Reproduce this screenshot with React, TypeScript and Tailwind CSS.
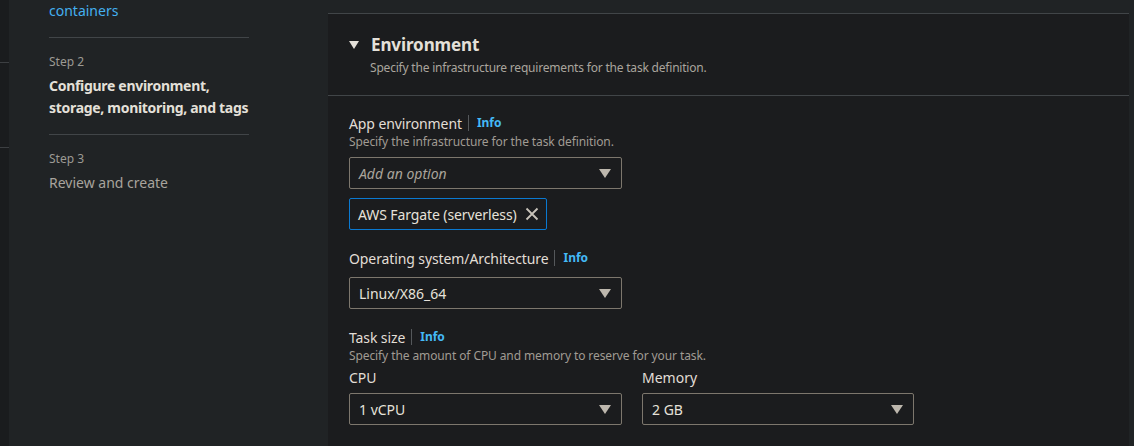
import React from "react";

const Caret = () => (
  <svg width="12" height="9" viewBox="0 0 12 9" className="shrink-0">
    <path d="M0 0 H12 L6 9 Z" fill="#bdb7ad" />
  </svg>
);

const Select = ({ value, placeholder, w }: { value?: string; placeholder?: string; w: string }) => (
  <div className={`${w} h-[32px] border border-[#7d776d] rounded-[2px] flex items-center justify-between pl-[9px] pr-[10px]`}>
    {placeholder ? (
      <span className="italic text-[#aaa49b] text-[14px]">{placeholder}</span>
    ) : (
      <span className="text-[#e6e2da] text-[14px]">{value}</span>
    )}
    <Caret />
  </div>
);

const Label = ({ text, info }: { text: string; info?: boolean }) => (
  <div className="flex items-center h-[22px]">
    <span className="text-[14px] text-[#e2ded6] tracking-[-0.1px]">{text}</span>
    {info && (
      <>
        <span className="ml-[6px] mr-[8px] w-px h-[16px] bg-[#55585b]" />
        <span className="text-[12px] font-bold text-[#44b9f6]">Info</span>
      </>
    )}
  </div>
);

export default function App() {
  return (
    <div
      className="flex w-[1134px] h-[446px] overflow-hidden bg-[#202325]"
      style={{ fontFamily: "'Noto Sans', 'Open Sans', sans-serif" }}
    >
      <div className="w-[9px] shrink-0 bg-[#1a1c1e] flex flex-col">
        <div className="h-[62px]" />
        <div className="h-px bg-[#3c3f42]" />
        <div className="h-[84px]" />
        <div className="h-px bg-[#3c3f42]" />
      </div>
      <div className="w-[319px] shrink-0 pl-[40px]">
        <div className="w-[200px]">
          <div className="text-[14px] leading-[22px] text-[#44b0f0] pb-[15px]">containers</div>
          <div className="h-px bg-[#414548]" />
          <div className="pt-[14px] pb-[15px]">
            <div className="text-[12px] leading-[20px] text-[#9c9a94]">Step 2</div>
            <div className="mt-[3px] w-[230px] text-[14px] leading-[22px] font-bold text-[#e4e0d9] tracking-[-0.3px]">
              Configure environment,
              <br />
              storage, monitoring, and tags
            </div>
          </div>
          <div className="h-px bg-[#414548]" />
          <div className="pt-[14px]">
            <div className="text-[12px] leading-[20px] text-[#9c9a94]">Step 3</div>
            <div className="mt-[3px] text-[14px] leading-[22px] text-[#a8a49d]">Review and create</div>
          </div>
        </div>
      </div>
      <div className="w-[801px] shrink-0 mt-[13px] bg-[#1b1c1e] border-t border-[#414548]">
        <div className="border-b border-[#414548] h-[82px] pl-[21px] pt-[19px]">
          <div className="flex items-center h-[24px]">
            <svg width="10" height="8" viewBox="0 0 10 8" className="mr-[12px]">
              <path d="M0 0 H10 L5 8 Z" fill="#e4e0d9" />
            </svg>
            <span className="text-[17px] font-bold text-[#e4e0d9] tracking-[-0.1px]">Environment</span>
          </div>
          <div className="pl-[21px] text-[12px] leading-[18px] text-[#aaa59d] mt-[2px] tracking-[-0.2px]">
            Specify the infrastructure requirements for the task definition.
          </div>
        </div>
        <div className="pl-[21px] pt-[16px]">
          <Label text="App environment" info />
          <div className="text-[12px] leading-[16px] text-[#a09b93] tracking-[-0.1px]">Specify the infrastructure for the task definition.</div>
          <div className="mt-[7px]">
            <Select placeholder="Add an option" w="w-[273px]" />
          </div>
          <div className="mt-[9px] w-[198px] h-[32px] border border-[#0a79d1] rounded-[2px] flex items-center pl-[8px]">
            <span className="text-[14px] text-[#e6e2da] tracking-[-0.1px]">AWS Fargate (serverless)</span>
            <svg width="14" height="14" viewBox="0 0 14 14" className="ml-[8px]">
              <path d="M1.5 1.5 L12.5 12.5 M12.5 1.5 L1.5 12.5" stroke="#c8c3ba" strokeWidth="1.8" />
            </svg>
          </div>
          <div className="mt-[17px]">
            <Label text="Operating system/Architecture" info />
          </div>
          <div className="mt-[8px]">
            <Select value="Linux/X86_64" w="w-[273px]" />
          </div>
          <div className="mt-[17px]">
            <Label text="Task size" info />
          </div>
          <div className="text-[12px] leading-[16px] text-[#a09b93] tracking-[-0.1px]">Specify the amount of CPU and memory to reserve for your task.</div>
          <div className="flex gap-[20px] mt-[3px]">
            <div>
              <div className="text-[14px] leading-[22px] text-[#e2ded6]">CPU</div>
              <div className="mt-[4px]">
                <Select value="1 vCPU" w="w-[273px]" />
              </div>
            </div>
            <div>
              <div className="text-[14px] leading-[22px] text-[#e2ded6]">Memory</div>
              <div className="mt-[4px]">
                <Select value="2 GB" w="w-[272px]" />
              </div>
            </div>
          </div>
        </div>
      </div>
      <div className="flex-1 bg-[#202325]" />
    </div>
  );
}
